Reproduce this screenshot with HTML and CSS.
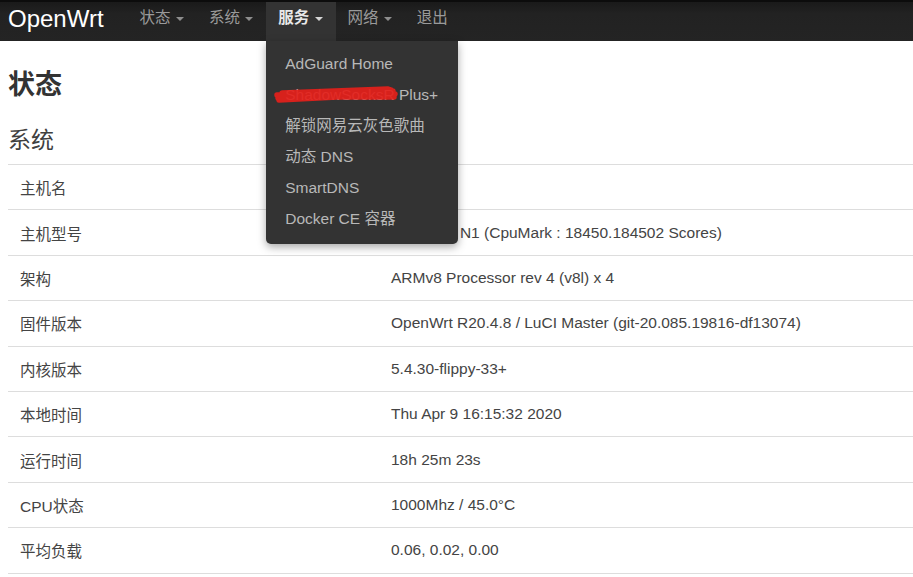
FILE: index.html
```html
<!DOCTYPE html>
<html lang="zh-CN">
<head>
    <meta charset="UTF-8">
    <title>OpenWrt - 状态</title>
    <link rel="stylesheet" href="styles.css">
</head>
<body>
    <div class="navbar">
        <a class="brand" href="#">OpenWrt</a>
        <ul class="nav">
            <li><a href="#">状态 <span class="caret"></span></a></li>
            <li><a href="#">系统 <span class="caret"></span></a></li>
            <li class="open">
                <a href="#">服务 <span class="caret"></span></a>
                <ul class="dropdown">
                    <li><a href="#">AdGuard Home</a></li>
                    <li class="scribbled">
                        <a href="#">ShadowSocksR Plus+</a>
                        <svg class="scribble" width="124" height="18" viewBox="0 0 124 18">
                            <path d="M4 12 L119 5 L5 14 L121 8 L3 9 L117 4 L6 11 L120 11 L8 7 L114 3" fill="none" stroke="#e5201a" stroke-width="5.5" stroke-linecap="round" stroke-linejoin="round" opacity="0.92"/>
                        </svg>
                    </li>
                    <li><a href="#">解锁网易云灰色歌曲</a></li>
                    <li><a href="#">动态 DNS</a></li>
                    <li><a href="#">SmartDNS</a></li>
                    <li><a href="#">Docker CE 容器</a></li>
                </ul>
            </li>
            <li><a href="#">网络 <span class="caret"></span></a></li>
            <li><a href="#">退出</a></li>
        </ul>
    </div>

    <div class="container">
        <h2>状态</h2>
        <h3>系统</h3>
        <table class="info">
            <tr><td class="key">主机名</td><td>OpenWrt</td></tr>
            <tr><td class="key">主机型号</td><td>Phicomm N1 (CpuMark : 18450.184502 Scores)</td></tr>
            <tr><td class="key">架构</td><td>ARMv8 Processor rev 4 (v8l) x 4</td></tr>
            <tr><td class="key">固件版本</td><td>OpenWrt R20.4.8 / LuCI Master (git-20.085.19816-df13074)</td></tr>
            <tr><td class="key">内核版本</td><td>5.4.30-flippy-33+</td></tr>
            <tr><td class="key">本地时间</td><td>Thu Apr 9 16:15:32 2020</td></tr>
            <tr><td class="key">运行时间</td><td>18h 25m 23s</td></tr>
            <tr><td class="key">CPU状态</td><td>1000Mhz / 45.0°C</td></tr>
            <tr><td class="key">平均负载</td><td>0.06, 0.02, 0.00</td></tr>
        </table>
    </div>
</body>
</html>
```

FILE: styles.css
```css
body {
    margin: 0;
    padding: 0;
    background-color: #fff;
    color: #444;
    font-family: "Liberation Sans", Arial, "Noto Sans CJK SC", sans-serif;
    font-size: 15.5px;
    overflow: hidden;
}

a {
    text-decoration: none;
}

.navbar {
    display: flex;
    align-items: stretch;
    height: 41px;
    background: linear-gradient(#1a1a1a, #222 30%, #242424);
    border-top: 2px solid #0c0c0c;
    box-sizing: border-box;
    position: relative;
    z-index: 10;
}

.brand {
    color: #fff;
    font-size: 24px;
    padding: 2px 24px 0 8px;
    line-height: 30px;
}

.nav {
    display: flex;
    list-style: none;
    margin: 0;
    padding: 0;
}

.nav > li {
    position: relative;
}

.nav > li > a {
    display: block;
    color: #9a9a9a;
    padding: 0 13px 0 12px;
    line-height: 31px;
    font-size: 15.5px;
}

.nav > li.open > a {
    background-color: #333;
    color: #e8e8e8;
    font-weight: bold;
    height: 39px;
}

.caret {
    display: inline-block;
    width: 0;
    height: 0;
    border-left: 4px solid transparent;
    border-right: 4px solid transparent;
    border-top: 4px solid currentColor;
    vertical-align: middle;
    margin-left: 1px;
    opacity: 0.9;
}

.dropdown {
    position: absolute;
    top: 39px;
    left: 0;
    width: 192px;
    margin: 0;
    padding: 7px 0 10px 0;
    list-style: none;
    background-color: #333;
    border-radius: 0 0 5px 5px;
    box-shadow: 0 3px 8px rgba(0, 0, 0, 0.35);
}

.dropdown li {
    position: relative;
}

.dropdown a {
    display: block;
    color: #b8b8b8;
    padding: 0 19px;
    line-height: 31px;
    font-size: 15.5px;
    white-space: nowrap;
}

.scribble {
    position: absolute;
    left: 8px;
    top: 7px;
}

.container {
    padding: 0 0 0 8px;
}

h2 {
    font-size: 27px;
    font-weight: bold;
    color: #333;
    margin: 0;
    padding: 26px 0 0 0;
    line-height: 36px;
}

h3 {
    font-size: 23px;
    font-weight: normal;
    color: #404040;
    margin: 0;
    padding: 20px 0 0 0;
    line-height: 34px;
}

.info {
    width: 100%;
    border-collapse: collapse;
    margin-top: 7px;
}

.info td {
    border-top: 1.5px solid #ddd;
    border-bottom: 1.5px solid #ddd;
    height: 44.4px;
    padding: 0 0 0 12px;
    vertical-align: middle;
}

.info td.key {
    width: 359px;
}
```
